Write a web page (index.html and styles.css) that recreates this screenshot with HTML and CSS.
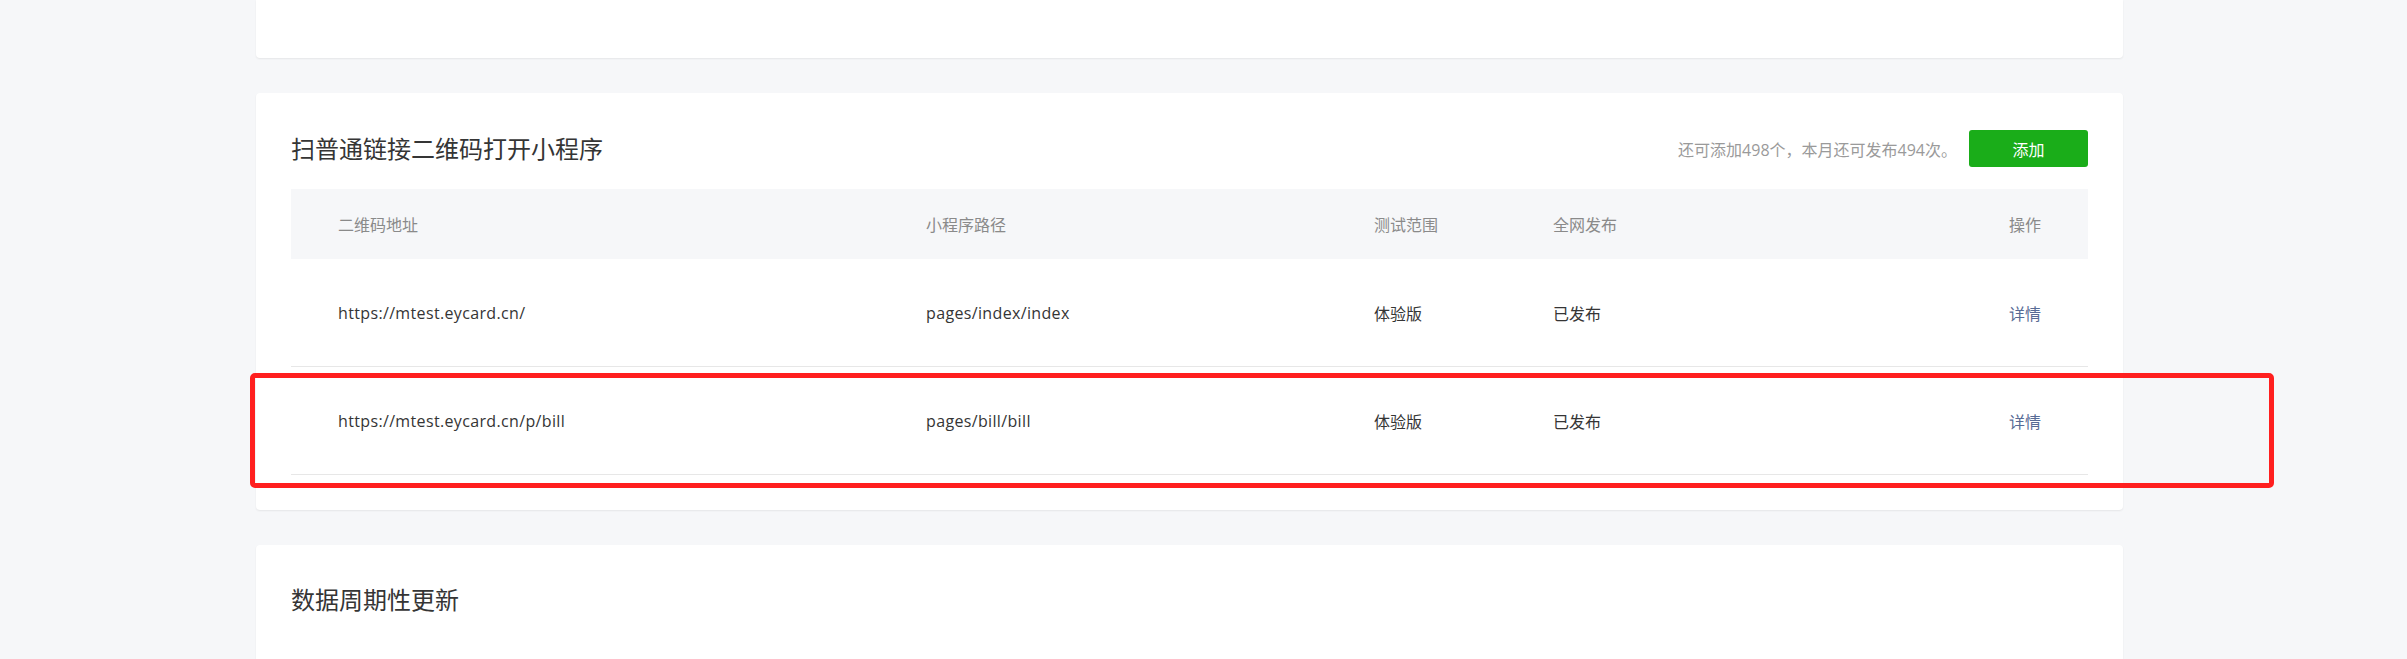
FILE: index.html
```html
<!DOCTYPE html>
<html lang="zh-CN">
<head>
  <meta charset="UTF-8">
  <title>开发设置</title>
  <link rel="stylesheet" href="styles.css">
</head>
<body>
  <div class="page">
    <!-- previous section, scrolled mostly out of view -->
    <div class="card card-cut"></div>

    <div class="card">
      <div class="card-head">
        <h2 class="card-title">扫普通链接二维码打开小程序</h2>
        <div class="card-extra">
          <span class="quota">还可添加498个，本月还可发布494次。</span>
          <button class="btn-primary">添加</button>
        </div>
      </div>

      <div class="rule-table">
        <div class="rule-row rule-head">
          <div>二维码地址</div>
          <div>小程序路径</div>
          <div>测试范围</div>
          <div>全网发布</div>
          <div class="col-op">操作</div>
        </div>
        <div class="rule-row">
          <div class="latin">https://mtest.eycard.cn/</div>
          <div class="latin">pages/index/index</div>
          <div>体验版</div>
          <div>已发布</div>
          <div class="col-op"><a class="link" href="#">详情</a></div>
        </div>
        <div class="rule-row is-marked">
          <div class="latin">https://mtest.eycard.cn/p/bill</div>
          <div class="latin">pages/bill/bill</div>
          <div>体验版</div>
          <div>已发布</div>
          <div class="col-op"><a class="link" href="#">详情</a></div>
          <span class="mark"></span>
        </div>
      </div>
    </div>

    <div class="card card-last">
      <div class="card-head">
        <h2 class="card-title">数据周期性更新</h2>
      </div>
    </div>
  </div>
</body>
</html>
```

FILE: styles.css
```css
/* Base styling */
body {
  margin: 0;
  padding: 0;
  font-family: "Open Sans", "Noto Sans CJK SC", sans-serif;
  font-size: 16px;
  color: #353535;
  background-color: #f6f7f9;
  overflow: hidden;
}

.page {
  width: 1867px;
  margin-left: 256px;
}

/* Cards */
.card {
  position: relative;
  background-color: #fff;
  border-radius: 4px;
  box-shadow: 0 1px 2px rgba(0, 0, 0, 0.07);
  padding: 37px 35px 35px;
  margin-bottom: 35px;
}

.card-cut {
  height: 58px;
  padding: 0;
  border-radius: 0 0 4px 4px;
}

.card-last {
  height: 200px;
  padding-top: 36px;
}

.card-head {
  display: flex;
  align-items: center;
  justify-content: space-between;
  height: 37px;
  margin-bottom: 22px;
}

.card-title {
  margin: -3px 0 0;
  font-size: 24px;
  font-weight: normal;
  color: #353535;
}

.card-extra {
  display: flex;
  align-items: center;
  gap: 12px;
}

.quota {
  color: #9a9a9a;
}

.btn-primary {
  width: 119px;
  height: 37px;
  border: none;
  border-radius: 3px;
  background-color: #1aad19;
  color: #fff;
  font-family: inherit;
  font-size: 16px;
  cursor: pointer;
}

/* Rules table */
.rule-row {
  position: relative;
  display: grid;
  grid-template-columns: 588px 448px 179px 1fr auto;
  align-items: center;
  height: 107px;
  padding: 0 47px;
  border-bottom: 1px solid #e7e7e7;
}

.rule-head {
  height: 70px;
  background-color: #f6f7f9;
  border-bottom: none;
  color: #8a8a8a;
}

.latin {
  letter-spacing: 0.35px;
}

.col-op {
  text-align: right;
}

.link {
  color: #576b95;
  text-decoration: none;
}

/* red annotation round the second rule */
.mark {
  position: absolute;
  left: -41px;
  top: 6px;
  width: 2024px;
  height: 115px;
  box-sizing: border-box;
  border: 5px solid #ff1f1f;
  border-radius: 5px;
  pointer-events: none;
}
```
